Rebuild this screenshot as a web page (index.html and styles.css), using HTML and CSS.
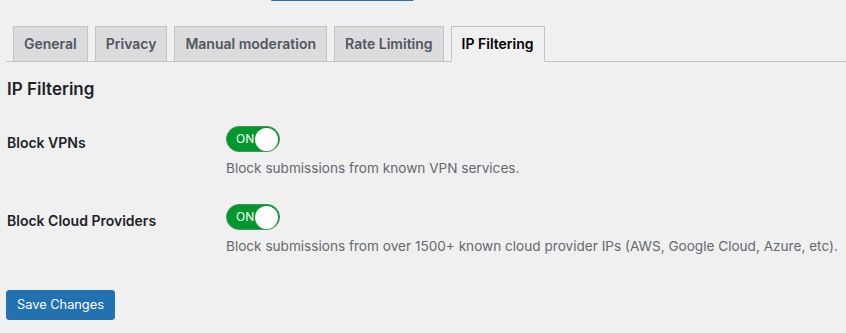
FILE: index.html
```html
<!DOCTYPE html>
<html lang="en">
<head>
  <meta charset="UTF-8">
  <meta name="viewport" content="width=device-width, initial-scale=1.0">
  <title>IP Filtering settings</title>
  <link rel="stylesheet" href="styles.css">
</head>
<body>
  <div class="wrap">
    <p class="intro">Apply at <a href="#">the account dashboard</a> to get an API key for this site. Keys are free for a single site, with a daily cap per key.</p>

    <nav class="nav-tab-wrapper">
      <a class="nav-tab" href="#">General</a>
      <a class="nav-tab" href="#">Privacy</a>
      <a class="nav-tab" href="#">Manual moderation</a>
      <a class="nav-tab" href="#">Rate Limiting</a>
      <a class="nav-tab nav-tab-active" href="#">IP Filtering</a>
    </nav>

    <h2 class="section-title">IP Filtering</h2>

    <div class="form-table">
      <div class="form-row">
        <div class="form-label">Block VPNs</div>
        <div class="form-field">
          <label class="toggle">
            <span class="toggle-text">ON</span>
            <span class="toggle-knob"></span>
          </label>
          <p class="description">Block submissions from known VPN services.</p>
        </div>
      </div>
      <div class="form-row">
        <div class="form-label">Block Cloud Providers</div>
        <div class="form-field">
          <label class="toggle">
            <span class="toggle-text">ON</span>
            <span class="toggle-knob"></span>
          </label>
          <p class="description">Block submissions from over 1500+ known cloud provider IPs (AWS, Google Cloud, Azure, etc).</p>
        </div>
      </div>
    </div>

    <p class="submit">
      <button class="button-primary" type="button">Save Changes</button>
    </p>
  </div>
</body>
</html>
```

FILE: styles.css
```css
/* base */
* {
  box-sizing: border-box;
}

body {
  margin: 0;
  background-color: #f0f0f1;
  color: #1d2327;
  font-family: Inter, "Noto Sans", sans-serif;
  font-size: 13px;
  line-height: 1.4;
  overflow: hidden;
}

.wrap {
  padding: 0 0 0 6px;
}

/* cut-off intro line above the tabs, only the descenders peek in */
.intro {
  margin: -16px 0 16px 211px;
  height: 17px;
  line-height: 17px;
  color: #3c434a;
  font-size: 13px;
  white-space: nowrap;
}

.intro a {
  color: #2271b1;
  text-decoration: underline;
  text-underline-offset: 3px;
}

/* tabs */
.nav-tab-wrapper {
  display: flex;
  padding-top: 9px;
  border-bottom: 1px solid #c3c4c7;
}

.nav-tab {
  display: block;
  margin: 0 0 -1px 7px;
  padding: 5px 10px;
  border: 1px solid #c3c4c7;
  background-color: #dcdcde;
  color: #50575e;
  font-size: 14px;
  font-weight: 600;
  line-height: 24px;
  text-decoration: none;
  white-space: nowrap;
}

.nav-tab-active {
  background-color: #f0f0f1;
  border-bottom-color: #f0f0f1;
  color: #000;
}

/* section */
.section-title {
  margin: 16px 0 0 1px;
  font-size: 17px;
  font-weight: 600;
  line-height: 22px;
  color: #1d2327;
}

.form-table {
  margin-top: 11px;
}

.form-row {
  display: flex;
}

.form-label {
  flex-shrink: 0;
  width: 210px;
  padding: 23px 10px 0 1px;
  font-size: 14px;
  font-weight: 600;
  line-height: 18px;
}

.form-field {
  padding: 15px 10px 11px 10px;
}

/* toggle switch */
.toggle {
  display: flex;
  align-items: center;
  justify-content: space-between;
  width: 54px;
  height: 26px;
  padding: 0 1px 0 9px;
  border: 1px solid #4d8f60;
  border-radius: 13px;
  background-color: #00982c;
  cursor: pointer;
}

.toggle-text {
  color: #fff;
  font-size: 12px;
  line-height: 1;
}

.toggle-knob {
  width: 23px;
  height: 23px;
  border-radius: 50%;
  background-color: #fff;
}

.description {
  margin: 6px 0 0;
  color: #646970;
  font-size: 13.6px;
  line-height: 20px;
  white-space: nowrap;
}

/* submit */
.submit {
  margin: 23px 0 0;
}

.button-primary {
  height: 30px;
  padding: 0 10px;
  border: 1px solid #2271b1;
  border-radius: 3px;
  background-color: #2271b1;
  color: #fff;
  font-family: inherit;
  font-size: 12.8px;
  line-height: 28px;
  cursor: pointer;
}
```
